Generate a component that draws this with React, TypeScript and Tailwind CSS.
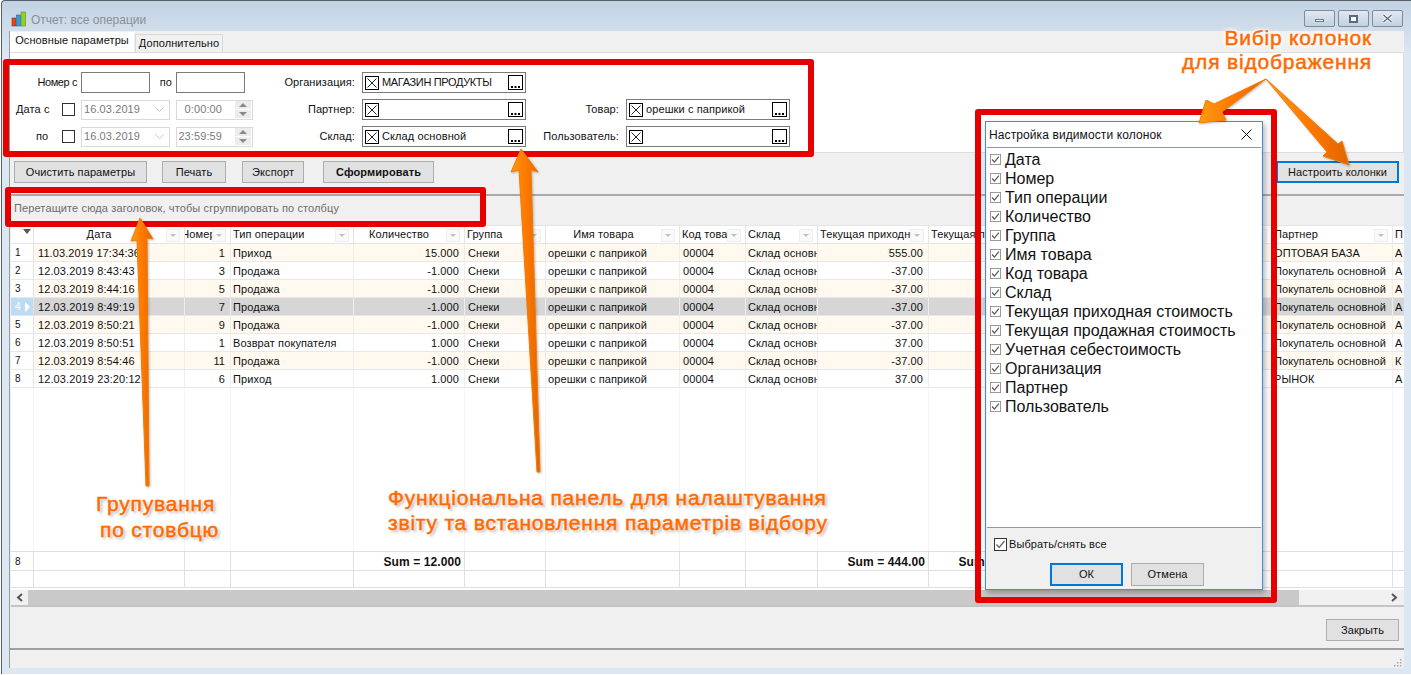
import React from "react";

interface Col {
  title: string;
  w: string;
  head: string;
  cell: string;
}

const cols: Col[] = [
  {title: "Дата", w: "w-[151px]", head: "justify-center pr-[20px]", cell: "justify-start pl-[4px]"},
  {title: "Номер", w: "w-[46px]", head: "justify-center pr-[18px]", cell: "justify-end pr-[5px]"},
  {title: "Тип операции", w: "w-[123px]", head: "justify-start pl-[2px]", cell: "justify-start pl-[2px]"},
  {title: "Количество", w: "w-[111px]", head: "justify-center pr-[20px]", cell: "justify-end pr-[5px]"},
  {title: "Группа", w: "w-[81px]", head: "justify-start pl-[2px]", cell: "justify-start pl-[3px]"},
  {title: "Имя товара", w: "w-[134px]", head: "justify-center pr-[18px]", cell: "justify-start pl-[2px]"},
  {title: "Код товара", w: "w-[66px]", head: "justify-start pl-[2px]", cell: "justify-start pl-[3px]"},
  {title: "Склад", w: "w-[72px]", head: "justify-start pl-[2px]", cell: "justify-start pl-[2px]"},
  {title: "Текущая приходная", w: "w-[111px]", head: "justify-start pl-[2px]", cell: "justify-end pr-[5px]"},
  {title: "Текущая продажная", w: "w-[111px]", head: "justify-start pl-[2px]", cell: "justify-end pr-[5px]"},
  {title: "Учетная", w: "w-[111px]", head: "justify-start pl-[2px]", cell: "justify-end pr-[5px]"},
  {title: "Организация", w: "w-[121px]", head: "justify-start pl-[2px]", cell: "justify-start pl-[2px]"},
  {title: "Партнер", w: "w-[121px]", head: "justify-start pl-[2px]", cell: "justify-start pl-[2px]"},
  {title: "П", w: "w-[12px]", head: "justify-start pl-[2px]", cell: "justify-start pl-[2px]"},
];

const base = ["орешки с паприкой", "00004", "Склад основной"];
const buyer = "Покупатель основной";

const rows: string[][] = [
  ["11.03.2019 17:34:36", "1", "Приход", "15.000", "Снеки", ...base, "555.00", "", "", "", "ОПТОВАЯ БАЗА", "А"],
  ["12.03.2019 8:43:43", "3", "Продажа", "-1.000", "Снеки", ...base, "-37.00", "", "", "", buyer, "А"],
  ["12.03.2019 8:44:16", "5", "Продажа", "-1.000", "Снеки", ...base, "-37.00", "", "", "", buyer, "А"],
  ["12.03.2019 8:49:19", "7", "Продажа", "-1.000", "Снеки", ...base, "-37.00", "", "", "", buyer, "А"],
  ["12.03.2019 8:50:21", "9", "Продажа", "-1.000", "Снеки", ...base, "-37.00", "", "", "", buyer, "А"],
  ["12.03.2019 8:50:51", "1", "Возврат покупателя", "1.000", "Снеки", ...base, "37.00", "", "", "", buyer, "А"],
  ["12.03.2019 8:54:46", "11", "Продажа", "-1.000", "Снеки", ...base, "-37.00", "", "", "", buyer, "К"],
  ["12.03.2019 23:20:12", "6", "Приход", "1.000", "Снеки", ...base, "37.00", "", "", "", "РЫНОК", "А"],
];

const visibility = [
  "Дата", "Номер", "Тип операции", "Количество", "Группа", "Имя товара", "Код товара", "Склад",
  "Текущая приходная стоимость", "Текущая продажная стоимость", "Учетная себестоимость",
  "Организация", "Партнер", "Пользователь",
];

function CrossBox() {
  return (
    <svg width="14" height="14" viewBox="0 0 14 14" className="shrink-0">
      <rect x="0.5" y="0.5" width="13" height="13" fill="#fff" stroke="#000" />
      <path d="M2.5 2.5L11.5 11.5M11.5 2.5L2.5 11.5" stroke="#222" strokeWidth="1" />
    </svg>
  );
}

function DotsButton() {
  return (
    <svg width="15" height="15" viewBox="0 0 15 15" className="shrink-0 ml-auto mr-px">
      <rect x="0.5" y="0.5" width="14" height="14" fill="#fff" stroke="#000" />
      <rect x="3" y="11" width="2" height="2" fill="#000" />
      <rect x="6.5" y="11" width="2" height="2" fill="#000" />
      <rect x="10" y="11" width="2" height="2" fill="#000" />
    </svg>
  );
}

function Picker({value}: {value?: string}) {
  return (
    <div className="w-[164px] h-[21px] border border-[#7a7a7a] bg-white flex items-center pl-[2px] pr-px text-[#111]">
      <CrossBox />
      <span className={`ml-[3px] whitespace-nowrap ${value === "МАГАЗИН ПРОДУКТЫ" ? "tracking-[-0.35px]" : ""}`}>{value}</span>
      <DotsButton />
    </div>
  );
}

function EmptyCheck() {
  return <div className="w-[13px] h-[13px] border border-[#333] bg-white shrink-0" />;
}

function Check({className}: {className: string}) {
  return (
    <svg viewBox="0 0 13 13" className={className}>
      <rect x="0.5" y="0.5" width="12" height="12" fill="#fff" stroke="#8a8a8a" />
      <path d="M2.5 6.5L5.2 9.5L10.5 3" fill="none" stroke="#555" strokeWidth="1.4" />
    </svg>
  );
}

function DateBox({value}: {value: string}) {
  return (
    <div className="w-[89px] h-[20px] border border-[#d9d9d9] bg-white flex items-center pl-[2px] text-[#7a7a7a]">
      <span>{value}</span>
      <svg width="9" height="6" viewBox="0 0 9 6" className="ml-auto mr-[5px]">
        <path d="M0.5 0.5L4.5 4.5L8.5 0.5" fill="none" stroke="#c4c4c4" />
      </svg>
    </div>
  );
}

function TimeBox({value}: {value: string}) {
  return (
    <div className="w-[77px] h-[20px] border border-[#d9d9d9] bg-white flex items-center text-[#7a7a7a]">
      <span className="flex-1 text-right pr-[13px]">{value}</span>
      <div className="w-[16px] h-[17px] mr-px flex flex-col gap-px">
        <div className="flex-1 bg-[#ececec] flex items-center justify-center">
          <div className="w-0 h-0 border-x-[4px] border-x-transparent border-b-[4px] border-b-[#8a8a8a]" />
        </div>
        <div className="flex-1 bg-[#ececec] flex items-center justify-center">
          <div className="w-0 h-0 border-x-[4px] border-x-transparent border-t-[4px] border-t-[#8a8a8a]" />
        </div>
      </div>
    </div>
  );
}

function Button({children, className, focused}: {children: React.ReactNode; className: string; focused?: boolean}) {
  const edge = focused ? "border-2 border-[#0078d7]" : "border border-[#adadad]";
  return (
    <div className={`bg-[#e1e1e1] flex items-center justify-center text-[#111] ${edge} ${className}`}>
      {children}
    </div>
  );
}

function FilterButton() {
  return (
    <div className="absolute right-[4px] top-[3px] w-[14px] h-[13px] border border-[#eeeeee] bg-[#f9f9f9] flex items-center justify-center">
      <div className="w-0 h-0 border-x-[3px] border-x-transparent border-t-[3px] border-t-[#c0c0c0]" />
    </div>
  );
}

function WinButton({children, className}: {children: React.ReactNode; className: string}) {
  return (
    <div className={`h-[17px] border border-[#7d8b9b] rounded-[2px] bg-gradient-to-b from-[#dfe8f2] to-[#c3d1df] flex items-center justify-center ${className}`}>
      {children}
    </div>
  );
}

function App() {
  return (
    <div className="relative w-[1411px] h-[675px] overflow-hidden bg-white font-['Liberation_Sans',sans-serif] text-[11px] tracking-[0.1px] leading-none text-[#111]">
      {/* window frame */}
      <div className="w-[1410px] h-[674px] ml-px bg-gradient-to-b from-[#c3d3e3] from-0% to-[#dbe7f3] to-[8%] border-l border-t border-[#5a6068] rounded-tl-[4px] flex flex-col">
        <div className="h-[30px] shrink-0 flex items-start pl-[9px] pr-[8px]">
          <svg width="16" height="16" viewBox="0 0 16 16" className="mt-[10px] shrink-0">
            <rect x="1" y="7" width="4" height="8" fill="#e2431e" stroke="#7a3a20" strokeWidth="0.6" />
            <rect x="5.5" y="4" width="4" height="11" fill="#2f9be0" stroke="#2a6a9a" strokeWidth="0.6" />
            <rect x="10" y="1" width="4.5" height="14" fill="#8fd02a" stroke="#5f8f20" strokeWidth="0.6" />
          </svg>
          <span className="mt-[13px] ml-[4px] text-[12px] tracking-normal text-[#8b8f94]">Отчет: все операции</span>
          <div className="ml-auto mt-[9px] flex gap-[3px]">
            <WinButton className="w-[31px]">
              <div className="w-[9px] h-[3px] border border-[#6b7a8a] bg-white mt-[4px]" />
            </WinButton>
            <WinButton className="w-[31px]">
              <div className="w-[9px] h-[8px] border-2 border-[#5a6a7a] bg-white" />
            </WinButton>
            <WinButton className="w-[31px]">
              <svg width="11" height="9" viewBox="0 0 11 9">
                <path d="M1.5 1L9.5 8M9.5 1L1.5 8" stroke="#fff" strokeWidth="3" />
                <path d="M1.5 1L9.5 8M9.5 1L1.5 8" stroke="#5d6b7a" strokeWidth="1.4" />
              </svg>
            </WinButton>
          </div>
        </div>

        <div className="ml-[7px] mr-[7px] flex-1 mb-[6px] bg-[#f0f0f0] flex flex-col border-l border-[#9a9a9a]">
          {/* tabs */}
          <div className="h-[21px] shrink-0 flex items-end">
            <div className="w-[124px] h-[20px] bg-white flex items-center justify-center pb-[3px]">Основные параметры</div>
            <div className="w-[88px] h-[18px] ml-px border border-b-0 border-[#d9d9d9] flex items-center justify-center">Дополнительно</div>
          </div>

          {/* parameters */}
          <div className="h-[101px] shrink-0 bg-white border-y border-r border-[#dddddd] pt-[19px] flex">
            <div className="w-[243px] flex flex-col gap-[6px]">
              <div className="h-[21px] flex items-center">
                <span className="w-[67px] text-right tracking-[-0.4px]">Номер с</span>
                <div className="w-[69px] h-[21px] ml-[4px] border border-[#7a7a7a]" />
                <span className="w-[26px] text-right pr-[4px]">по</span>
                <div className="w-[69px] h-[21px] border border-[#7a7a7a]" />
              </div>
              <div className="h-[21px] flex items-center">
                <span className="w-[52px] pl-[6px]">Дата с</span>
                <EmptyCheck />
                <div className="ml-[6px] mr-[6px]"><DateBox value="16.03.2019" /></div>
                <TimeBox value="0:00:00" />
              </div>
              <div className="h-[21px] flex items-center">
                <span className="w-[52px] pl-[26px]">по</span>
                <EmptyCheck />
                <div className="ml-[6px] mr-[6px]"><DateBox value="16.03.2019" /></div>
                <TimeBox value="23:59:59" />
              </div>
            </div>
            <div className="w-[273px] flex flex-col gap-[6px]">
              {[["Организация:", "МАГАЗИН ПРОДУКТЫ"], ["Партнер:", ""], ["Склад:", "Склад основной"]].map((item) => (
                <div key={item[0]} className="h-[21px] flex items-center">
                  <span className="w-[102px] text-right mr-[7px]">{item[0]}</span>
                  <Picker value={item[1]} />
                </div>
              ))}
            </div>
            <div className="flex flex-col gap-[6px]">
              <div className="h-[21px]" />
              {[["Товар:", "орешки с паприкой"], ["Пользователь:", ""]].map((item) => (
                <div key={item[0]} className="h-[21px] flex items-center">
                  <span className="w-[93px] text-right mr-[7px]">{item[0]}</span>
                  <Picker value={item[1]} />
                </div>
              ))}
            </div>
          </div>

          {/* toolbar */}
          <div className="h-[43px] shrink-0 flex items-start pt-[8px] pl-[4px] pr-[5px] border-b-2 border-[#a9a9a9]">
            <Button className="h-[22px] w-[133px]">Очистить параметры</Button>
            <Button className="h-[22px] w-[64px] ml-[15px]">Печать</Button>
            <Button className="h-[22px] w-[62px] ml-[16px]">Экспорт</Button>
            <Button className="h-[22px] w-[111px] ml-[19px] font-bold">Сформировать</Button>
            <Button focused className="h-[22px] w-[123px] ml-auto">Настроить колонки</Button>
          </div>

          {/* group panel */}
          <div className="h-[29px] shrink-0 flex items-center pl-[4px] pb-[5px] text-[#6d6d6d] tracking-[0.12px]">
            Перетащите сюда заголовок, чтобы сгруппировать по столбцу
          </div>

          {/* grid */}
          <div className="ml-px h-[382px] shrink-0 border-b-2 border-[#c4c4c4] flex flex-col bg-white overflow-hidden">
            <div className="h-[19px] shrink-0 flex border-y border-[#e5e5e5]">
              <div className="w-[23px] shrink-0 border-r border-[#e5e5e5] flex justify-end pr-[2px] pt-[3px]">
                <div className="w-0 h-0 border-x-[4px] border-x-transparent border-t-[5px] border-t-[#555]" />
              </div>
              {cols.map((col) => (
                <div key={col.title} className={`relative shrink-0 ${col.w} border-r border-[#e5e5e5] flex items-center whitespace-nowrap overflow-hidden ${col.head}`}>
                  <span>{col.title}</span>
                  {col.title !== "П" && <FilterButton />}
                </div>
              ))}
            </div>

            {rows.map((row, index) => (
              <div key={`row-${index}`} className={`h-[18px] shrink-0 flex border-b border-[#e8e8e8] ${index === 3 ? "bg-[#d6d6d6]" : index % 2 === 0 ? "bg-[#fff9ef]" : "bg-white"}`}>
                <div className={`w-[23px] shrink-0 border-r border-[#e5e5e5] flex items-center pl-[4px] pt-px text-[10px] ${index === 3 ? "bg-[#bcdcf4] text-white" : "bg-white"}`}>
                  {index + 1}
                  {index === 3 && <div className="ml-[4px] w-0 h-0 border-y-[5px] border-y-transparent border-l-[5px] border-l-white" />}
                </div>
                {cols.map((col, cellIndex) => (
                  <div key={col.title} className={`shrink-0 ${col.w} border-r border-[#eeeeee] flex items-center pt-px whitespace-nowrap overflow-hidden ${col.cell}`}>
                    {row[cellIndex]}
                  </div>
                ))}
              </div>
            ))}

            <div className="h-[163px] shrink-0 flex">
              <div className="w-[23px] shrink-0 border-r border-[#f6f6f6]" />
              {cols.map((col) => (
                <div key={col.title} className={`shrink-0 ${col.w} border-r border-[#f6f6f6]`} />
              ))}
            </div>

            <div className="h-[20px] shrink-0 flex border-y border-[#e0e0e0]">
              <div className="w-[23px] shrink-0 border-r border-[#e0e0e0] flex items-center pl-[4px] pt-px text-[10px]">8</div>
              {cols.map((col) => (
                <div key={col.title} className={`shrink-0 ${col.w} border-r border-[#e0e0e0] flex items-center justify-end pr-[3px] pt-px text-[12px] font-bold whitespace-nowrap overflow-hidden`}>
                  {col.title === "Количество" && "Sum = 12.000"}
                  {col.title === "Текущая приходная" && "Sum = 444.00"}
                  {col.title === "Текущая продажная" && "Sum = 444.00"}
                </div>
              ))}
            </div>
            <div className="h-[17px] shrink-0 flex border-b border-[#e0e0e0]">
              <div className="w-[23px] shrink-0 border-r border-[#e0e0e0]" />
              {cols.map((col) => (
                <div key={col.title} className={`shrink-0 ${col.w} border-r border-[#e0e0e0]`} />
              ))}
            </div>

            {/* scrollbar */}
            <div className="mt-[2px] h-[15px] shrink-0 flex items-center bg-[#f0f0f0]">
              <svg width="17" height="15" viewBox="0 0 17 15" className="shrink-0">
                <path d="M11 4L7 7.5L11 11" fill="none" stroke="#555" strokeWidth="2" />
              </svg>
              <div className="w-[1271px] h-[15px] bg-[#c9c9c9] shrink-0" />
              <svg width="17" height="15" viewBox="0 0 17 15" className="shrink-0 ml-auto mr-[1px]">
                <path d="M6 4L10 7.5L6 11" fill="none" stroke="#555" strokeWidth="2" />
              </svg>
            </div>
          </div>

          {/* bottom */}
          <div className="h-[43px] shrink-0 flex items-start justify-end pt-[12px] pr-[5px] border-b-2 border-[#a0a0a0]">
            <Button className="h-[22px] w-[73px]">Закрыть</Button>
          </div>
          <div className="flex-1 relative">
            <svg width="9" height="9" viewBox="0 0 9 9" className="absolute right-[2px] bottom-[1px]">
              <path d="M7 1h1.5v1.5H7zM4 4h1.5v1.5H4zM7 4h1.5v1.5H7zM1 7h1.5v1.5H1zM4 7h1.5v1.5H4zM7 7h1.5v1.5H7z" fill="#a8a8a8" />
            </svg>
          </div>
        </div>
      </div>

      {/* column settings dialog */}
      <div className="absolute left-[985px] top-[121px] w-[278px] h-[469px] border border-[#3f8fd2] bg-[#f0f0f0] shadow-[2px_3px_6px_rgba(0,0,0,0.3)] flex flex-col">
        <div className="h-[25px] shrink-0 bg-white flex items-center pl-[3px] pr-[10px] text-[12px]">
          <span>Настройка видимости колонок</span>
          <svg width="11" height="11" viewBox="0 0 11 11" className="ml-auto">
            <path d="M0.5 0.5L10.5 10.5M10.5 0.5L0.5 10.5" stroke="#111" />
          </svg>
        </div>
        <div className="mx-px h-[381px] shrink-0 border-y border-[#8a9aa8] bg-white pt-[2px] flex flex-col text-[16px] tracking-normal text-[#111]">
          {visibility.map((name) => (
            <div key={name} className="h-[19px] shrink-0 flex items-center pl-[3px]">
              <Check className="w-[11px] h-[11px] shrink-0" />
              <span className="ml-[4px] whitespace-nowrap">{name}</span>
            </div>
          ))}
        </div>
        <div className="flex items-center h-[32px] pl-[8px] pt-[1px]">
          <svg viewBox="0 0 13 13" className="w-[13px] h-[13px] shrink-0">
            <rect x="0.5" y="0.5" width="12" height="12" fill="#fff" stroke="#333" />
            <path d="M2.5 6.5L5.2 9.5L10.5 3" fill="none" stroke="#6a6a6a" strokeWidth="1.4" />
          </svg>
          <span className="ml-[2px]">Выбрать/снять все</span>
        </div>
        <div className="flex mt-[3px] pl-[64px] gap-[8px]">
          <Button focused className="w-[73px] h-[23px]">ОК</Button>
          <Button className="w-[73px] h-[23px]">Отмена</Button>
        </div>
      </div>

      {/* red highlight boxes */}
      <div className="absolute left-[3px] top-[59px] w-[811px] h-[98px] border-[6px] border-[#e60000] rounded-[3px] pointer-events-none" />
      <div className="absolute left-[5px] top-[187px] w-[481px] h-[40px] border-[6px] border-[#e60000] rounded-[3px] pointer-events-none" />
      <div className="absolute left-[975px] top-[109px] w-[302px] h-[494px] border-[6px] border-[#e60000] rounded-[3px] pointer-events-none" />

      {/* arrows */}
      <svg width="1411" height="675" viewBox="0 0 1411 675" className="absolute left-0 top-0 pointer-events-none drop-shadow-[1px_1px_1px_rgba(0,0,0,0.25)]">
        <defs>
          <linearGradient id="arrow-fill" x1="0" y1="0" x2="1" y2="0">
            <stop offset="0" stopColor="#ff9a10" />
            <stop offset="0.5" stopColor="#ff7a00" />
            <stop offset="1" stopColor="#e06400" />
          </linearGradient>
        </defs>
        <g fill="url(#arrow-fill)" stroke="#f57a00" strokeWidth="1" strokeLinejoin="round">
          <polygon points="140,218 153,239 147,238 149,486 146,486 137,240 131,241" />
          <polygon points="521,149 538,172 531,170 540,472 537,472 519,170 511,172" />
          <polygon points="1199,123 1206,100 1214,104 1266,79 1222,112 1226,120" />
          <polygon points="1266,79 1338,144 1342,141 1349,165 1323,156 1327,152" />
        </g>
      </svg>

      {/* annotations */}
      <div className="absolute left-[1170px] top-[26px] w-[202px] flex flex-col items-end gap-[1px] text-[21px] leading-[23px] tracking-[0.8px] text-[#ff6a00] whitespace-nowrap [-webkit-text-stroke:0.5px_#ff6a00] [text-shadow:0_0_3px_#fff,0_0_4px_#fff,0_0_4px_#fff,0_0_5px_#fff,0_0_6px_#fff]">
        <span>Вибір колонок</span>
        <span>для відображення</span>
      </div>
      <div className="absolute left-[96px] top-[492px] flex flex-col items-start gap-[3px] text-[21px] leading-[23px] tracking-[0.8px] text-[#ff6a00] whitespace-nowrap [-webkit-text-stroke:0.5px_#ff6a00] [text-shadow:0_0_3px_#fff,2px_2px_3px_#aaa]">
        <span>Групування</span>
        <span className="pl-[4px]">по стовбцю</span>
      </div>
      <div className="absolute left-[388px] top-[486px] flex flex-col gap-[2px] text-[21px] leading-[23px] tracking-[0.8px] text-[#ff6a00] whitespace-nowrap [-webkit-text-stroke:0.5px_#ff6a00] [text-shadow:0_0_3px_#fff,2px_2px_3px_#aaa]">
        <span>Функціональна панель для налаштування</span>
        <span>звіту та встановлення параметрів відбору</span>
      </div>
    </div>
  );
}

export default App;
